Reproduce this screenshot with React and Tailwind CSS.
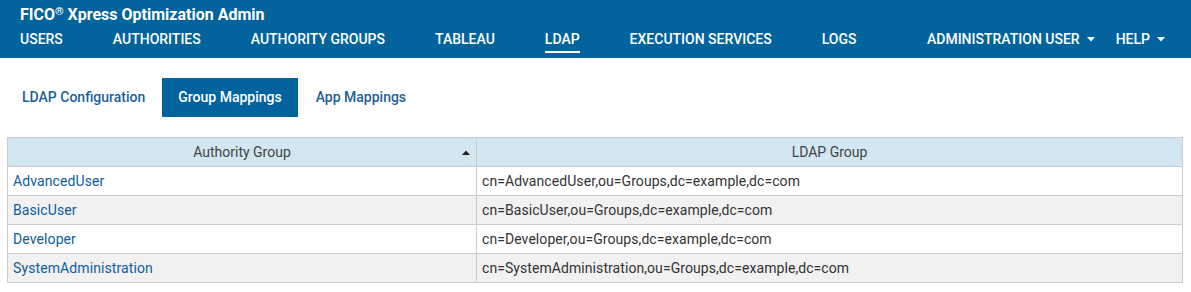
import React from "react";

const rows = [
  ["AdvancedUser", "cn=AdvancedUser,ou=Groups,dc=example,dc=com"],
  ["BasicUser", "cn=BasicUser,ou=Groups,dc=example,dc=com"],
  ["Developer", "cn=Developer,ou=Groups,dc=example,dc=com"],
  ["SystemAdministration", "cn=SystemAdministration,ou=Groups,dc=example,dc=com"],
];

const nav = ["USERS", "AUTHORITIES", "AUTHORITY GROUPS", "TABLEAU", "LDAP", "EXECUTION SERVICES", "LOGS"];

function Caret() {
  return (
    <svg width="8" height="5" viewBox="0 0 8 5" className="ml-[7px]">
      <path d="M0 0 L8 0 L4 4.5 Z" fill="white" />
    </svg>
  );
}

export default function App() {
  return (
    <div className="w-[1191px] h-[292px] bg-white" style={{ fontFamily: "Roboto, 'Liberation Sans', sans-serif" }}>
      <header className="h-[58px] bg-[#02639d] text-white pl-[20px] pr-[26px]">
        <div className="pt-[5px] text-[16px] font-bold leading-[20px]">
          FICO<span className="text-[11px] relative top-[-5px] leading-none">®</span> Xpress Optimization Admin
        </div>
        <nav className="flex items-start mt-[6px] text-[14px] leading-[17px] font-medium">
          <div className="flex gap-[50px]">
            {nav.map((n) => (
              <div key={n} className="flex flex-col">
                <span>{n}</span>
                {n === "LDAP" && <span className="h-[2px] bg-white mt-[3px]"></span>}
              </div>
            ))}
          </div>
          <div className="ml-auto flex gap-[21px]">
            <div className="flex items-center">ADMINISTRATION USER<Caret /></div>
            <div className="flex items-center">HELP<Caret /></div>
          </div>
        </nav>
      </header>
      <div className="flex pl-[6px] mt-[20px] gap-[1px] text-[14px] font-medium">
        <div className="px-[16px] h-[39px] flex items-center text-[#1e5f97]">LDAP Configuration</div>
        <div className="px-[16px] h-[39px] flex items-center bg-[#02639d] text-white">Group Mappings</div>
        <div className="px-[17px] h-[39px] flex items-center text-[#1e5f97]">App Mappings</div>
      </div>
      <div className="px-[7px] mt-[20px]">
        <table className="w-[1176px] border-collapse text-[14px] table-fixed">
          <colgroup>
            <col className="w-[469px]" />
            <col />
          </colgroup>
          <thead>
            <tr className="bg-[#d3e7f3] h-[29px]">
              <th className="border border-[#cccccc] font-normal text-[#444] relative">
                Authority Group
                <svg width="8" height="5" viewBox="0 0 8 5" className="absolute right-[6px] top-[12px]">
                  <path d="M0 5 L8 5 L4 0.5 Z" fill="#222" />
                </svg>
              </th>
              <th className="border border-[#cccccc] font-normal text-[#444]">LDAP Group</th>
            </tr>
          </thead>
          <tbody>
            {rows.map((r, i) => (
              <tr key={r[0]} className={`h-[29px] ${i % 2 === 1 ? "bg-[#f1f1f1]" : "bg-white"}`}>
                <td className="border border-[#cccccc] px-[5px] text-[#0d5e9c] tracking-[0.1px]">{r[0]}</td>
                <td className="border border-[#cccccc] px-[5px] text-[#333] tracking-[0.07px]">{r[1]}</td>
              </tr>
            ))}
          </tbody>
        </table>
      </div>
    </div>
  );
}
